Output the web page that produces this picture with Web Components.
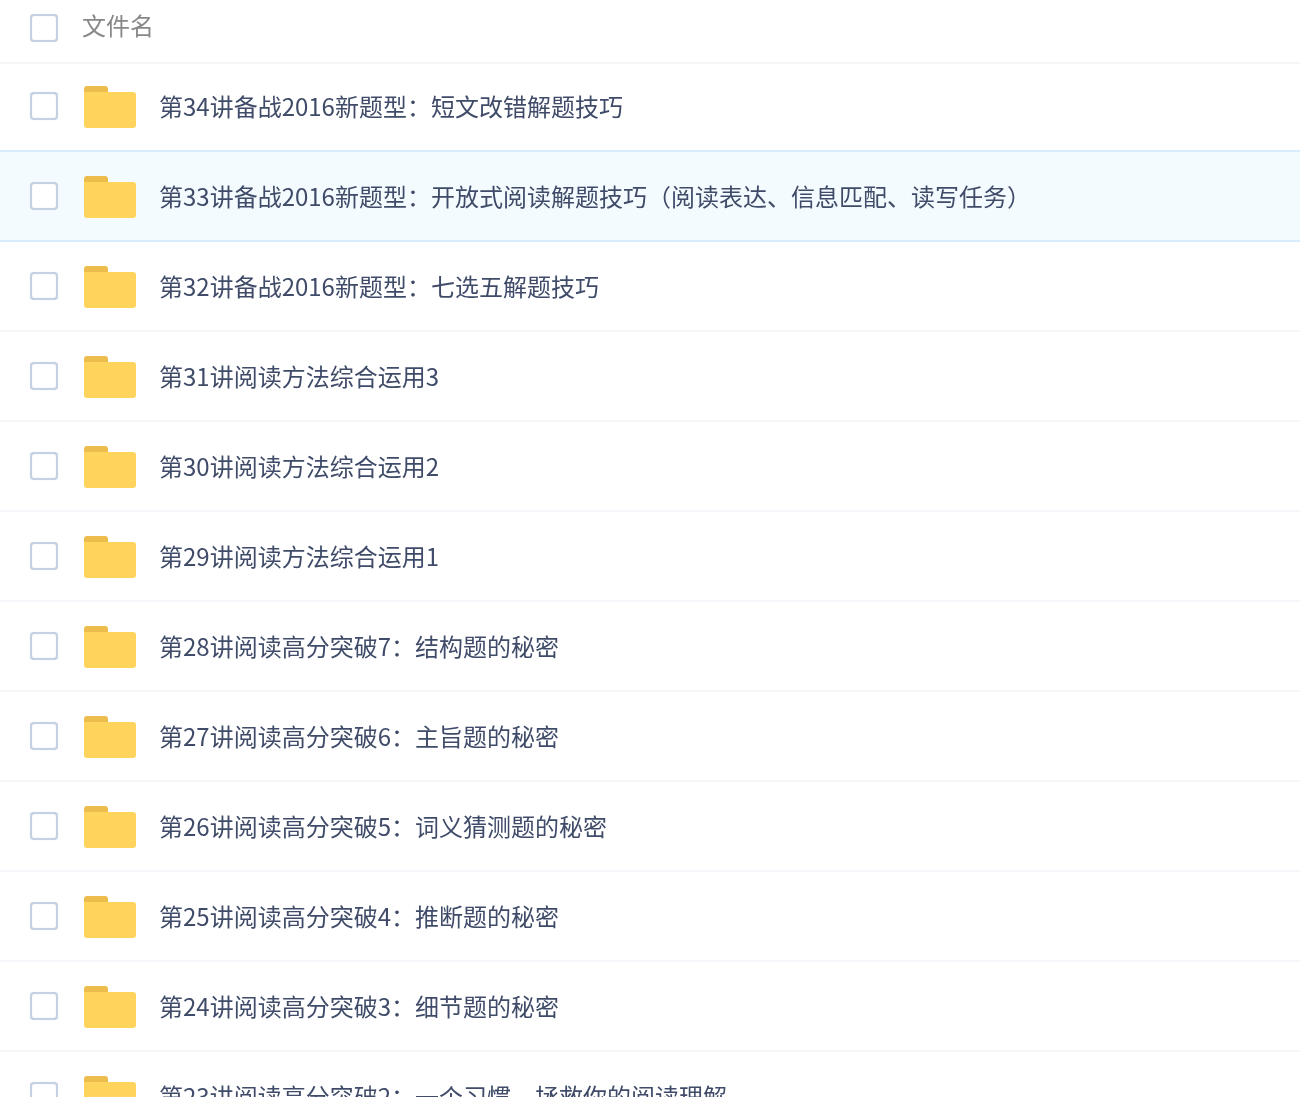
<!DOCTYPE html>
<html lang="zh">
<head>
<meta charset="utf-8">
<title>文件列表</title>
<style>
    html, body {
        margin: 0;
        height: 100%;
        overflow: hidden;
        background: #fff;
        font-family: "Noto Sans CJK SC", sans-serif;
    }
</style>
</head>
<body>
<file-list>
    <file-header>文件名</file-header>
    <file-row>第34讲备战2016新题型：短文改错解题技巧</file-row>
    <file-row active>第33讲备战2016新题型：开放式阅读解题技巧（阅读表达、信息匹配、读写任务）</file-row>
    <file-row>第32讲备战2016新题型：七选五解题技巧</file-row>
    <file-row>第31讲阅读方法综合运用3</file-row>
    <file-row>第30讲阅读方法综合运用2</file-row>
    <file-row>第29讲阅读方法综合运用1</file-row>
    <file-row>第28讲阅读高分突破7：结构题的秘密</file-row>
    <file-row>第27讲阅读高分突破6：主旨题的秘密</file-row>
    <file-row>第26讲阅读高分突破5：词义猜测题的秘密</file-row>
    <file-row>第25讲阅读高分突破4：推断题的秘密</file-row>
    <file-row>第24讲阅读高分突破3：细节题的秘密</file-row>
    <file-row>第23讲阅读高分突破2：一个习惯，拯救你的阅读理解</file-row>
</file-list>
<script>
(function () {
    class FileCheck extends HTMLElement {
        constructor() {
            super();
            this.attachShadow({mode: "open"});
            this.shadowRoot.innerHTML = `
            <style>
            :host {
                display: block;
                box-sizing: border-box;
                width: 28px;
                height: 28px;
                flex: none;
                border: 2px solid #c4d1e2;
                border-radius: 4px;
                background: #fff;
                box-shadow: inset 0 0 1px #c4d1e2, 0 0 1px #d3dde9;
            }
            </style>`;
        }
    }

    class FolderIcon extends HTMLElement {
        constructor() {
            super();
            this.attachShadow({mode: "open"});
            this.shadowRoot.innerHTML = `
            <style>
            :host {
                display: block;
                width: 52px;
                height: 42px;
                flex: none;
            }
            svg { display: block; }
            </style>
            <svg width="52" height="42" viewBox="0 0 52 42">
                <path fill="#ecbd4d" d="M0 3a3 3 0 0 1 3-3h18a3 3 0 0 1 3 3v5H0z"/>
                <path fill="#ffd45c" d="M0 9a3 3 0 0 1 3-3h46a3 3 0 0 1 3 3v30a3 3 0 0 1-3 3H3a3 3 0 0 1-3-3z M0 6h24v4H0z"/>
            </svg>`;
        }
    }

    class FileHeader extends HTMLElement {
        constructor() {
            super();
            this.attachShadow({mode: "open"});
            this.shadowRoot.innerHTML = `
            <style>
            :host {
                display: flex;
                align-items: center;
                box-sizing: border-box;
                height: 64px;
                margin-bottom: -2px;
                padding: 0 30px 6px;
                border-bottom: 2px solid #f5f5f6;
                color: #888;
                font-size: 24px;
            }
            .name { margin-left: 24px; padding-bottom: 8px; }
            </style>
            <file-check></file-check>
            <span class="name"><slot></slot></span>`;
        }
    }

    class FileRow extends HTMLElement {
        constructor() {
            super();
            this.attachShadow({mode: "open"});
            this.shadowRoot.innerHTML = `
            <style>
            :host {
                display: flex;
                align-items: center;
                box-sizing: border-box;
                height: 90px;
                padding: 0 30px;
                border-bottom: 2px solid #f5f6fa;
                color: #3f4b68;
                font-size: 24px;
            }
            :host([active]) {
                background: #f3fbff;
                border-bottom-color: #d7ecfc;
                box-shadow: 0 -2px 0 #d7ecfc;
            }
            folder-icon { margin: 2px 0 0 26px; }
            .name { margin-left: 23px; padding-bottom: 2px; white-space: nowrap; }
            </style>
            <file-check></file-check>
            <folder-icon></folder-icon>
            <span class="name"><slot></slot></span>`;
        }
    }

    class FileList extends HTMLElement {
        constructor() {
            super();
            this.attachShadow({mode: "open"});
            // the reference is a slightly upscaled capture, so everything is a little soft
            this.shadowRoot.innerHTML = `
            <style>
            :host { display: block; width: 1300px; filter: blur(0.4px); }
            </style>
            <slot></slot>`;
        }
    }

    customElements.define("file-check", FileCheck);
    customElements.define("folder-icon", FolderIcon);
    customElements.define("file-header", FileHeader);
    customElements.define("file-row", FileRow);
    customElements.define("file-list", FileList);
}());
</script>
</body>
</html>
